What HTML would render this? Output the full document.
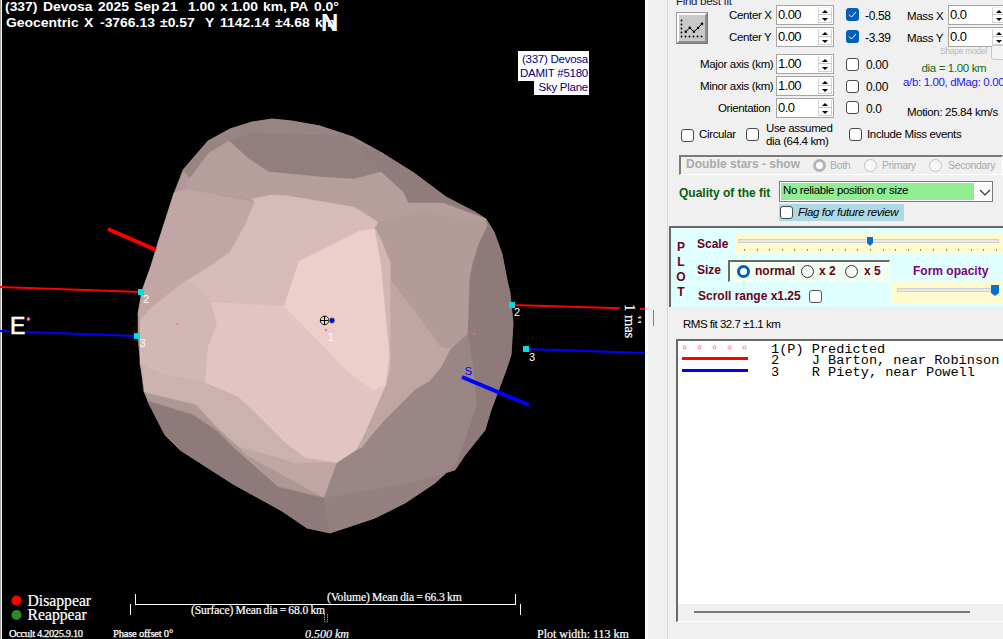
<!DOCTYPE html>
<html><head><meta charset="utf-8">
<style>
*{margin:0;padding:0;box-sizing:border-box}
html,body{width:1003px;height:639px;overflow:hidden;background:#f0f0f0;font-family:"Liberation Sans",sans-serif}
.a{position:absolute;white-space:pre;line-height:1}
#cv{position:absolute;left:0;top:0;width:645px;height:639px;background:#000;overflow:hidden}
.hd{font-weight:bold;font-size:13px;color:#fff;transform:scaleX(1.07);transform-origin:0 0}
.sf{font-family:"Liberation Serif",serif;color:#fff;-webkit-text-stroke:0.2px #fff}
.ui{font-size:11.5px;color:#000;letter-spacing:-0.35px}
.spin{position:absolute;width:58px;height:20px;border:1px solid #a4a4a4;background:#fff}
.spin .v{position:absolute;left:1px;top:1px;font-size:13px;letter-spacing:-0.6px;color:#000}
.spin .bt{position:absolute;left:41px;top:1px;width:14px;height:16px;border:1px solid #d0d0d0;border-top-color:#f4f4f4}
.spin .bt:before{content:"";position:absolute;left:3px;top:1.5px;border-left:3px solid transparent;border-right:3px solid transparent;border-bottom:3.5px solid #000}
.spin .bt:after{content:"";position:absolute;left:3px;top:9.5px;border-left:3px solid transparent;border-right:3px solid transparent;border-top:3.5px solid #000}
.spin .mid{position:absolute;left:42px;top:8px;width:13px;height:1px;background:#c4c4c4}
.cb{position:absolute;width:13px;height:13px;border:1px solid #4a4a4a;border-radius:3px;background:#fff}
.cbc{position:absolute;width:13px;height:13px;border-radius:3px;background:#005fb8}
.mono{font-family:"Liberation Mono",monospace;font-size:13.6px;color:#000}
.bm{font-weight:bold;font-size:12px;color:#6b0020}
.rad{position:absolute;width:13px;height:13px;border:1px solid #333;border-radius:50%;background:#f8f8f8}
</style></head><body>
<div id="cv">
<div style="position:absolute;left:0;top:0;width:1px;height:639px;background:#a0a0a0"></div>
<div style="position:absolute;left:1px;top:0;width:1px;height:639px;background:#f4f4f4"></div>
<svg id="ast" width="645" height="639" style="position:absolute;left:0;top:0">
<!--AST-->
<polygon fill="#b09997" stroke="#b09997" stroke-width="0.5" stroke-linejoin="round" points="272,119 292,121 320,126 353,137 382,153 414,173 446,197 475,212 486,219 494,232 502,254 507,280 510,293 513,323 511,355 506,370 497,394 491,410 485,430 465,455 435,483 405,503 375,518 330,533 307,528 282,511 233,484 180,450 165,435 148,402 141,368 138,338 138,314 142,291 151,266 158,243 166,218 174,193 183,170 208,141 230,129 252,122"/>
<polygon fill="#988482" stroke="#988482" stroke-width="0.5" stroke-linejoin="round" points="183,170 208,141 230,129 252,122 272,119 292,121 320,126 353,137 382,153 374,166 354,143 348,136 252,133 229,141 209,153 190,178"/>
<polygon fill="#927f7d" stroke="#927f7d" stroke-width="0.5" stroke-linejoin="round" points="229,141 252,133 348,136 354,143 374,166 381,172 354,179 321,177 269,172 249,159"/>
<polygon fill="#8f7c7b" stroke="#8f7c7b" stroke-width="0.5" stroke-linejoin="round" points="354,143 382,153 414,173 446,197 475,212 486,219 443,203 408,203 403,192 381,172 374,166"/>
<polygon fill="#b59e9c" stroke="#b59e9c" stroke-width="0.5" stroke-linejoin="round" points="186,189 190,178 209,153 229,141 249,159 269,172 321,177 354,179 381,172 403,192 408,203 443,203 486,219 480,222 422,212 392,219 378,222 354,207 289,196 271,195 252,199"/>
<polygon fill="#c0a7a5" stroke="#c0a7a5" stroke-width="0.5" stroke-linejoin="round" points="174,193 186,189 255,202 245,225 230,252 212,265 180,285 152,307 140,320 138,314 142,291 151,266 158,243 166,218"/>
<polygon fill="#d7bbb9" stroke="#d7bbb9" stroke-width="0.5" stroke-linejoin="round" points="252,199 271,195 289,196 354,207 378,222 375,229 359,231 299,261 284,306 211,302 189,282 180,285 212,265 230,252 245,225 255,202"/>
<polygon fill="#d2b7b4" stroke="#d2b7b4" stroke-width="0.5" stroke-linejoin="round" points="140,320 152,307 180,285 189,282 211,302 217,324 208,347 205,383 163,375 140,364"/>
<polygon fill="#e2c5c2" stroke="#e2c5c2" stroke-width="0.5" stroke-linejoin="round" points="211,302 284,306 346,370 372,390 386,386 377,407 366,432 357,450 337,463 305,458 284,442 257,415 238,397 205,383 208,347 217,324"/>
<polygon fill="#eccecb" stroke="#eccecb" stroke-width="0.5" stroke-linejoin="round" points="299,261 359,231 375,229 381,262 384,294 390,356 386,386 372,390 346,370 284,306"/>
<polygon fill="#d1b6b3" stroke="#d1b6b3" stroke-width="0.5" stroke-linejoin="round" points="375,229 392,222 394,309 397,356 391,372 386,386 390,356 384,294 381,262"/>
<polygon fill="#cbb1af" stroke="#cbb1af" stroke-width="0.5" stroke-linejoin="round" points="140,364 163,375 205,383 238,397 257,415 284,442 305,458 337,463 294,463 278,458 238,447 215,426 196,405 150,394 144,392 141,368"/>
<polygon fill="#c0a7a5" stroke="#c0a7a5" stroke-width="0.5" stroke-linejoin="round" points="238,447 278,458 294,463 337,463 324,498 278,487"/>
<polygon fill="#ae9795" stroke="#ae9795" stroke-width="0.5" stroke-linejoin="round" points="144,392 150,394 196,405 215,426 238,447 278,487 324,498 236,450 217,431 193,415 148,401"/>
<polygon fill="#8d7a79" stroke="#8d7a79" stroke-width="0.5" stroke-linejoin="round" points="148,401 193,415 217,431 236,450 278,487 324,498 330,533 307,528 282,511 233,484 180,450 165,435"/>
<polygon fill="#b29b99" stroke="#b29b99" stroke-width="0.5" stroke-linejoin="round" points="375,227 391,219 422,212 480,222 488,225 479,244 473,263 470,278 468,334 451,349 441,368 430,381 415,390 400,405 385,420 372,435 362,448 357,450 366,432 377,407 386,386 391,370 391,294 391,263 382,241"/>
<polygon fill="#bfa6a4" stroke="#bfa6a4" stroke-width="0.5" stroke-linejoin="round" points="391,281 410,305 428,329 440,347 451,349 441,368 430,381 415,390 400,405 385,420 372,435 362,448 357,450 366,432 377,407 386,386 391,370"/>
<polygon fill="#9a8684" stroke="#9a8684" stroke-width="0.5" stroke-linejoin="round" points="324,498 337,463 357,450 362,448 372,435 385,420 400,405 415,390 430,381 441,368 451,349 468,334 474,370 477,405 455,470 407,484"/>
<polygon fill="#94817f" stroke="#94817f" stroke-width="0.5" stroke-linejoin="round" points="324,498 407,484 455,470 465,455 435,483 405,503 375,518 330,533"/>
<polygon fill="#8d7a79" stroke="#8d7a79" stroke-width="0.5" stroke-linejoin="round" points="486,219 494,232 502,254 507,280 510,293 513,323 511,355 506,370 497,394 491,410 485,430 465,455 455,470 477,405 474,370 468,334 470,278 473,263 479,244 488,225"/>
<!-- lines -->
<polyline points="0,287 141,292" stroke="#ff0000" stroke-width="2" fill="none"/>
<polyline points="0,331 136,336" stroke="#0000ff" stroke-width="2" fill="none"/>
<polyline points="512,305 645,309" stroke="#ff0000" stroke-width="2" fill="none"/>
<polyline points="526,349 645,353" stroke="#0000ff" stroke-width="2" fill="none"/>
<polyline points="108,229 156,250" stroke="#ff0000" stroke-width="4" fill="none"/>
<polyline points="462,377 529,405" stroke="#0000ff" stroke-width="4" fill="none"/>
<rect x="138" y="289" width="6" height="6" fill="#00e0e0"/>
<rect x="134" y="333" width="6" height="6" fill="#00e0e0"/>
<rect x="509" y="302" width="6" height="6" fill="#00e0e0"/>
<rect x="523" y="346" width="6" height="6" fill="#00e0e0"/>
<circle cx="177" cy="324" r="1" fill="#ff60c0"/>
<circle cx="474" cy="334" r="1" fill="#ff60c0"/>
<circle cx="326" cy="330" r="1.2" fill="#ff60c0"/>
<circle cx="28.5" cy="319" r="1.5" fill="#ff60c0"/>
<text x="143" y="303" fill="#fff" font-family="Liberation Sans" font-size="11">2</text>
<text x="139.5" y="347" fill="#fff" font-family="Liberation Sans" font-size="11">3</text>
<text x="514" y="316" fill="#fff" font-family="Liberation Sans" font-size="11">2</text>
<text x="529" y="361" fill="#fff" font-family="Liberation Sans" font-size="11">3</text>
<text x="328" y="341" fill="#fff" font-family="Liberation Sans" font-size="10">1</text>
<text x="464.5" y="374.5" fill="#0000ff" font-family="Liberation Sans" font-size="11.5">S</text>
<circle cx="324.6" cy="320.4" r="4.3" fill="none" stroke="#222" stroke-width="1"/>
<line x1="320" y1="320.5" x2="329" y2="320.5" stroke="#000" stroke-width="1"/>
<line x1="324.5" y1="316" x2="324.5" y2="325" stroke="#000" stroke-width="1"/>
<circle cx="332" cy="320.5" r="3" fill="#0000ff" stroke="#e0e000" stroke-width="0.8"/>
</svg>
<!-- header -->
<div class="a hd" style="left:5px;top:0px">(337)</div>
<div class="a hd" style="left:43px;top:0px">Devosa</div>
<div class="a hd" style="left:98px;top:0px">2025</div>
<div class="a hd" style="left:133.5px;top:0px">Sep</div>
<div class="a hd" style="left:162px;top:0px">21</div>
<div class="a hd" style="left:188px;top:0px">1.00</div>
<div class="a hd" style="left:219.5px;top:0px">x</div>
<div class="a hd" style="left:231px;top:0px">1.00</div>
<div class="a hd" style="left:262.5px;top:0px">km,</div>
<div class="a hd" style="left:290px;top:0px">PA</div>
<div class="a hd" style="left:314px;top:0px">0.0°</div>
<div class="a hd" style="left:6px;top:16px">Geocentric</div>
<div class="a hd" style="left:84px;top:16px">X</div>
<div class="a hd" style="left:100px;top:16px">-3766.13</div>
<div class="a hd" style="left:160px;top:16px">±0.57</div>
<div class="a hd" style="left:205px;top:16px">Y</div>
<div class="a hd" style="left:219.5px;top:16px">1142.14</div>
<div class="a hd" style="left:274.5px;top:16px">±4.68</div>
<div class="a hd" style="left:315px;top:16px">km</div>
<div class="a" style="left:321px;top:12px;font-size:23.5px;color:#fff;font-weight:bold;transform:scaleX(1.02);transform-origin:0 0">N</div>
<div class="a" style="left:9px;top:314px;width:17px;height:22px;background:#000"></div>
<div class="a" style="left:10px;top:315px;font-size:23px;color:#fff;-webkit-text-stroke:0.6px #fff">E</div>
<svg class="a" width="6" height="6" style="left:26px;top:316px"><circle cx="2.5" cy="3" r="1.6" fill="#ff80c0" stroke="#c04080" stroke-width="0.6"/></svg>
<!-- sky plane label -->
<div class="a" style="left:518px;top:51px;width:71px;height:30px;background:#fff"></div>
<div class="a" style="left:534px;top:81px;width:55px;height:14px;background:#fff"></div>
<div class="a" style="left:509px;top:52px;width:79px;text-align:right;font-size:11.5px;letter-spacing:-0.25px;line-height:14px;color:#000080">(337) Devosa
DAMIT #5180
Sky Plane</div>
<!-- bottom -->
<svg width="645" height="639" style="position:absolute;left:0;top:0">
<circle cx="16.5" cy="600.5" r="5" fill="#ff0000"/>
<circle cx="16.5" cy="615" r="5" fill="#2a8a2a"/>
<line x1="135" y1="604.5" x2="516" y2="604.5" stroke="#fff" stroke-width="1"/>
<line x1="135.5" y1="594" x2="135.5" y2="605" stroke="#fff" stroke-width="1"/>
<line x1="515.5" y1="594" x2="515.5" y2="605" stroke="#fff" stroke-width="1"/>
<line x1="130.5" y1="604" x2="130.5" y2="615" stroke="#fff" stroke-width="1"/>
<line x1="520.5" y1="604" x2="520.5" y2="615" stroke="#fff" stroke-width="1"/>
</svg>
<div class="a sf" style="left:27.5px;top:593px;font-size:15.7px">Disappear</div>
<div class="a sf" style="left:27.5px;top:607px;font-size:15.7px">Reappear</div>
<div class="a sf" style="left:9px;top:628.5px;font-size:10.5px;letter-spacing:-0.38px;-webkit-text-stroke:0.25px #fff">Occult 4.2025.9.10</div>
<div class="a sf" style="left:113px;top:629px;font-size:10.5px;letter-spacing:-0.2px;-webkit-text-stroke:0.25px #fff">Phase offset 0°</div>
<div class="a sf" style="left:327px;top:592px;font-size:11.6px;letter-spacing:-0.1px;word-spacing:-0.6px">(Volume) Mean dia = 66.3 km</div>
<div class="a sf" style="left:191px;top:605px;font-size:11.6px;letter-spacing:-0.1px;word-spacing:-0.6px">(Surface) Mean dia = 68.0 km</div>
<div class="a sf" style="left:305px;top:628px;font-size:12px;font-style:italic">0.500 km</div>
<div class="a sf" style="left:537px;top:628px;font-size:12px">Plot width: 113 km</div>
<svg class="a" width="6" height="12" style="left:323px;top:613px"><path d="M1.5,1 V9 H4.5 V1" fill="none" stroke="#999" stroke-width="1" stroke-dasharray="1.5,1"/></svg>
<div class="a" style="left:620px;top:300px;width:20px;height:44px;background:#000"></div>
<div class="a sf" style="left:637px;top:304px;font-size:14.5px;transform:rotate(90deg);transform-origin:0 0">1 mas</div>
<div class="a" style="left:638px;top:314px;width:5px;height:12px;overflow:hidden"><div class="a sf" style="left:4px;top:1px;font-size:10px;transform:rotate(90deg);transform-origin:0 0">11</div></div>
</div>
<!-- right panel -->

<div id="rp" style="position:absolute;left:645px;top:0;width:358px;height:639px;background:#f0f0f0">
<div class="a" style="left:0;top:0;width:3px;height:639px;background:#fbfbfb"></div>
<div class="a" style="left:22px;top:0;width:1px;height:639px;background:#d8d8d8"></div>
</div>
<!-- find best fit group -->
<div class="a" style="left:676px;top:-4.5px;font-size:11.5px;color:#10104a;letter-spacing:-0.3px">Find best fit</div>
<div class="a" style="left:676px;top:12px;width:32px;height:32px;border:1px solid #7a7a7a;background:#c9c9c9;border-top-color:#9a9a9a;border-left-color:#9a9a9a"></div>
<div class="a" style="left:677px;top:13px;width:30px;height:30px;border-top:2px solid #fff;border-left:2px solid #fff;border-right:2px solid #8c8c8c;border-bottom:2px solid #8c8c8c"></div>
<svg class="a" width="32" height="32" style="left:676px;top:12px">
<g fill="#000"><circle cx="5.5" cy="8.5" r="0.9"/><circle cx="5.5" cy="12.5" r="0.9"/><circle cx="5.5" cy="16.5" r="0.9"/><circle cx="5.5" cy="20.5" r="0.9"/><circle cx="5.5" cy="24.5" r="0.9"/>
<circle cx="9.5" cy="24.5" r="0.9"/><circle cx="13.5" cy="24.5" r="0.9"/><circle cx="17.5" cy="24.5" r="0.9"/><circle cx="21.5" cy="24.5" r="0.9"/><circle cx="25.5" cy="24.5" r="0.9"/>
<circle cx="9.8" cy="19.8" r="1.3"/><circle cx="13.8" cy="15.7" r="1.2"/><circle cx="17.9" cy="19.8" r="1.2"/><circle cx="22" cy="16" r="1.2"/><circle cx="26" cy="11.7" r="1.3"/></g>
<polyline points="9.8,19.8 13.8,15.7 17.9,19.8 22,16 26,11.7" fill="none" stroke="#000" stroke-width="1"/>
</svg>
<div class="a ui" style="left:729px;top:10px">Center X</div>
<div class="a ui" style="left:729px;top:32px">Center Y</div>
<div class="a ui" style="left:700px;top:59px">Major axis (km)</div>
<div class="a ui" style="left:700px;top:81px">Minor axis (km)</div>
<div class="a ui" style="left:718px;top:103px">Orientation</div>
<div class="spin" style="left:776px;top:5px"><span class="v">0.00</span><span class="bt"></span><span class="mid"></span></div>
<div class="spin" style="left:776px;top:27px"><span class="v">0.00</span><span class="bt"></span><span class="mid"></span></div>
<div class="spin" style="left:776px;top:54px"><span class="v">1.00</span><span class="bt"></span><span class="mid"></span></div>
<div class="spin" style="left:776px;top:76px"><span class="v">1.00</span><span class="bt"></span><span class="mid"></span></div>
<div class="spin" style="left:776px;top:98px"><span class="v">0.0</span><span class="bt"></span><span class="mid"></span></div>
<div class="cbc" style="left:846px;top:8px"></div>
<div class="cbc" style="left:846px;top:30px"></div>
<svg class="a" width="13" height="13" style="left:846px;top:8px"><polyline points="3,6.5 5.5,9 10,4" fill="none" stroke="#fff" stroke-width="1"/></svg>
<svg class="a" width="13" height="13" style="left:846px;top:30px"><polyline points="3,6.5 5.5,9 10,4" fill="none" stroke="#fff" stroke-width="1"/></svg>
<div class="a ui" style="left:865px;top:10px;font-size:12px">-0.58</div>
<div class="a ui" style="left:865px;top:32px;font-size:12px">-3.39</div>
<div class="cb" style="left:846px;top:58px"></div>
<div class="cb" style="left:846px;top:80px"></div>
<div class="cb" style="left:846px;top:101px"></div>
<div class="a ui" style="left:866px;top:59px;font-size:12px">0.00</div>
<div class="a ui" style="left:866px;top:81px;font-size:12px">0.00</div>
<div class="a ui" style="left:866px;top:103px;font-size:12px">0.0</div>
<div class="a ui" style="left:907px;top:11px">Mass X</div>
<div class="a ui" style="left:907px;top:33px">Mass Y</div>
<div class="spin" style="left:948px;top:5px;width:70px"><span class="v">0.0</span><span class="bt" style="left:43px;right:auto"></span><span class="mid" style="left:43px;right:auto"></span></div>
<div class="spin" style="left:948px;top:27px;width:70px"><span class="v">0.0</span><span class="bt" style="left:43px;right:auto"></span><span class="mid" style="left:43px;right:auto"></span></div>
<div class="a" style="left:940px;top:47px;font-size:8.5px;color:#b8b8b8;letter-spacing:-0.3px">Shape model</div>
<div class="a" style="left:991px;top:45px;width:16px;height:15px;border:1px solid #c8c8c8;border-radius:3px;background:#f4f4f4"></div>
<div class="a ui" style="left:921.5px;top:63px;color:#0f6e0f">dia = 1.00 km</div>
<div class="a ui" style="left:903px;top:77px;color:#1a1aff">a/b: 1.00, dMag: 0.00</div>
<div class="a ui" style="left:907px;top:107px">Motion: 25.84 km/s</div>
<div class="cb" style="left:681px;top:129px"></div>
<div class="a ui" style="left:699px;top:129px">Circular</div>
<div class="cb" style="left:746px;top:128px"></div>
<div class="a ui" style="left:766px;top:122px;line-height:13px">Use assumed
dia (64.4 km)</div>
<div class="cb" style="left:849px;top:128px"></div>
<div class="a ui" style="left:867px;top:129px">Include Miss events</div>
<!-- double stars -->
<div class="a" style="left:679px;top:155px;width:324px;height:20px;border-top:2px solid #7a7a7a;border-left:2px solid #7a7a7a;border-bottom:1px solid #fff;border-right:1px solid #fff"></div>
<div class="a" style="left:686px;top:158px;font-weight:bold;font-size:12px;color:#aaa">Double stars - show</div>
<div class="a" style="left:813px;top:159px;width:13px;height:13px;border-radius:50%;border:3.5px solid #b4b4b4;background:#fff"></div>
<div class="a ui" style="left:830px;top:160px;color:#aaa;font-size:10.5px">Both</div>
<div class="rad" style="left:864px;top:159px;border-color:#c0c0c0"></div>
<div class="a ui" style="left:882px;top:160px;color:#aaa;font-size:10.5px">Primary</div>
<div class="rad" style="left:929px;top:159px;border-color:#c0c0c0"></div>
<div class="a ui" style="left:948px;top:160px;color:#aaa;font-size:10.5px">Secondary</div>
<div class="a" style="left:679px;top:186.5px;font-weight:bold;font-size:12px;color:#0a5c0a">Quality of the fit</div>
<div class="a" style="left:779px;top:181px;width:214px;height:21px;border:1px solid #7a7a7a;background:#fff"></div>
<div class="a" style="left:781px;top:183px;width:193px;height:17px;background:#90ee90"></div>
<div class="a ui" style="left:783px;top:185px;font-size:11.5px">No reliable position or size</div>
<svg class="a" width="12" height="8" style="left:979px;top:189px"><polyline points="1,1 6,6 11,1" fill="none" stroke="#333" stroke-width="1.2"/></svg>
<div class="a" style="left:779px;top:204px;width:125px;height:17px;background:#add8e6"></div>
<div class="cb" style="left:780px;top:206px"></div>
<div class="a ui" style="left:798px;top:207px;font-style:italic">Flag for future review</div>
<!-- plot panel -->
<div class="a" style="left:669px;top:226px;width:340px;height:81px;background:#e0ffff;border-top:2px solid #696969;border-left:2px solid #696969"></div>
<div class="a bm" style="left:676px;top:240px;line-height:15px;text-align:center;width:10px">P
L
O
T</div>
<div class="a bm" style="left:697px;top:238px">Scale</div>
<div class="a" style="left:736px;top:234px;width:267px;height:19px;background:#fffacd"></div>
<div class="a" style="left:738px;top:239px;width:261px;height:4px;background:#e8e8e8;border:1px solid #d0d0d0"></div>
<svg class="a" width="12" height="11" style="left:866px;top:236px"><path d="M1,1 H7 V7 L4,10 L1,7 Z" fill="#0a6ed1"/></svg>
<svg class="a" width="1003" height="639" style="left:0;top:0"><rect x="744" y="249" width="1" height="2" fill="#909090"/><rect x="757" y="249" width="1" height="2" fill="#909090"/><rect x="769" y="249" width="1" height="2" fill="#909090"/><rect x="782" y="249" width="1" height="2" fill="#909090"/><rect x="794" y="249" width="1" height="2" fill="#909090"/><rect x="807" y="249" width="1" height="2" fill="#909090"/><rect x="820" y="249" width="1" height="2" fill="#909090"/><rect x="832" y="249" width="1" height="2" fill="#909090"/><rect x="845" y="249" width="1" height="2" fill="#909090"/><rect x="857" y="249" width="1" height="2" fill="#909090"/><rect x="870" y="249" width="1" height="2" fill="#909090"/><rect x="883" y="249" width="1" height="2" fill="#909090"/><rect x="895" y="249" width="1" height="2" fill="#909090"/><rect x="908" y="249" width="1" height="2" fill="#909090"/><rect x="920" y="249" width="1" height="2" fill="#909090"/><rect x="933" y="249" width="1" height="2" fill="#909090"/><rect x="946" y="249" width="1" height="2" fill="#909090"/><rect x="958" y="249" width="1" height="2" fill="#909090"/><rect x="971" y="249" width="1" height="2" fill="#909090"/><rect x="983" y="249" width="1" height="2" fill="#909090"/><rect x="996" y="249" width="1" height="2" fill="#909090"/><rect x="902" y="300" width="1" height="2" fill="#909090"/><rect x="914" y="300" width="1" height="2" fill="#909090"/><rect x="927" y="300" width="1" height="2" fill="#909090"/><rect x="939" y="300" width="1" height="2" fill="#909090"/><rect x="952" y="300" width="1" height="2" fill="#909090"/><rect x="964" y="300" width="1" height="2" fill="#909090"/><rect x="976" y="300" width="1" height="2" fill="#909090"/><rect x="989" y="300" width="1" height="2" fill="#909090"/></svg>
<div class="a bm" style="left:697px;top:264px">Size</div>
<div class="a" style="left:728px;top:260px;width:162px;height:22px;background:#f0fff0;border-top:2px solid #696969;border-left:2px solid #696969;border-bottom:1px solid #fff;border-right:1px solid #fff"></div>
<div class="a" style="left:737px;top:265px;width:13px;height:13px;border-radius:50%;background:#fff;border:3.5px solid #005fb8"></div>
<div class="a bm" style="left:755px;top:265px">normal</div>
<div class="rad" style="left:801px;top:265px"></div>
<div class="a bm" style="left:819px;top:265px">x 2</div>
<div class="rad" style="left:845px;top:265px"></div>
<div class="a bm" style="left:864px;top:265px">x 5</div>
<div class="a" style="left:913px;top:265px;font-weight:bold;font-size:12px;color:#800080">Form opacity</div>
<div class="a" style="left:891px;top:282px;width:112px;height:21px;background:#fffacd"></div>
<div class="a" style="left:897px;top:288px;width:102px;height:4px;background:#e8e8e8;border:1px solid #d0d0d0"></div>
<svg class="a" width="12" height="13" style="left:990px;top:284px"><path d="M1,1 H9 V9 L5,12 L1,9 Z" fill="#0a6ed1"/></svg>
<div class="a bm" style="left:698px;top:290px">Scroll range x1.25</div>
<div class="cb" style="left:809px;top:290px;border-color:#555"></div>
<!-- rms & list -->
<div class="a" style="left:653px;top:310px;width:1px;height:16px;background:#808080"></div>
<div class="a ui" style="left:683px;top:319px;font-size:11.5px;letter-spacing:-0.5px">RMS fit 32.7 ±1.1 km</div>
<div class="a" style="left:676px;top:339px;width:330px;height:283px;background:#fff;border-top:2px solid #696969;border-left:2px solid #696969;border-bottom:1px solid #fff"></div>
<div class="a" style="left:678px;top:604px;width:325px;height:17px;background:#f0f0f0"></div>
<div class="a" style="left:694px;top:611px;width:276px;height:2px;background:#7a7a7a"></div>
<svg class="a" width="80" height="40" style="left:676px;top:339px">
<g fill="none" stroke="#ff69b4" stroke-width="1"><circle cx="8.5" cy="8.5" r="1.5"/><circle cx="23.5" cy="8.5" r="1.5"/><circle cx="38.5" cy="8.5" r="1.5"/><circle cx="53.5" cy="8.5" r="1.5"/><circle cx="68.5" cy="8.5" r="1.5"/></g>
<rect x="6" y="18" width="66" height="3" fill="#ff0000"/>
<rect x="6" y="30" width="66" height="3" fill="#0000ff"/>
</svg>
<div class="a mono" style="left:771px;top:344px;line-height:13px;transform:scaleY(0.885);transform-origin:0 0">1(P) Predicted
2    J Barton, near Robinson
3    R Piety, near Powell</div>
</body></html>
